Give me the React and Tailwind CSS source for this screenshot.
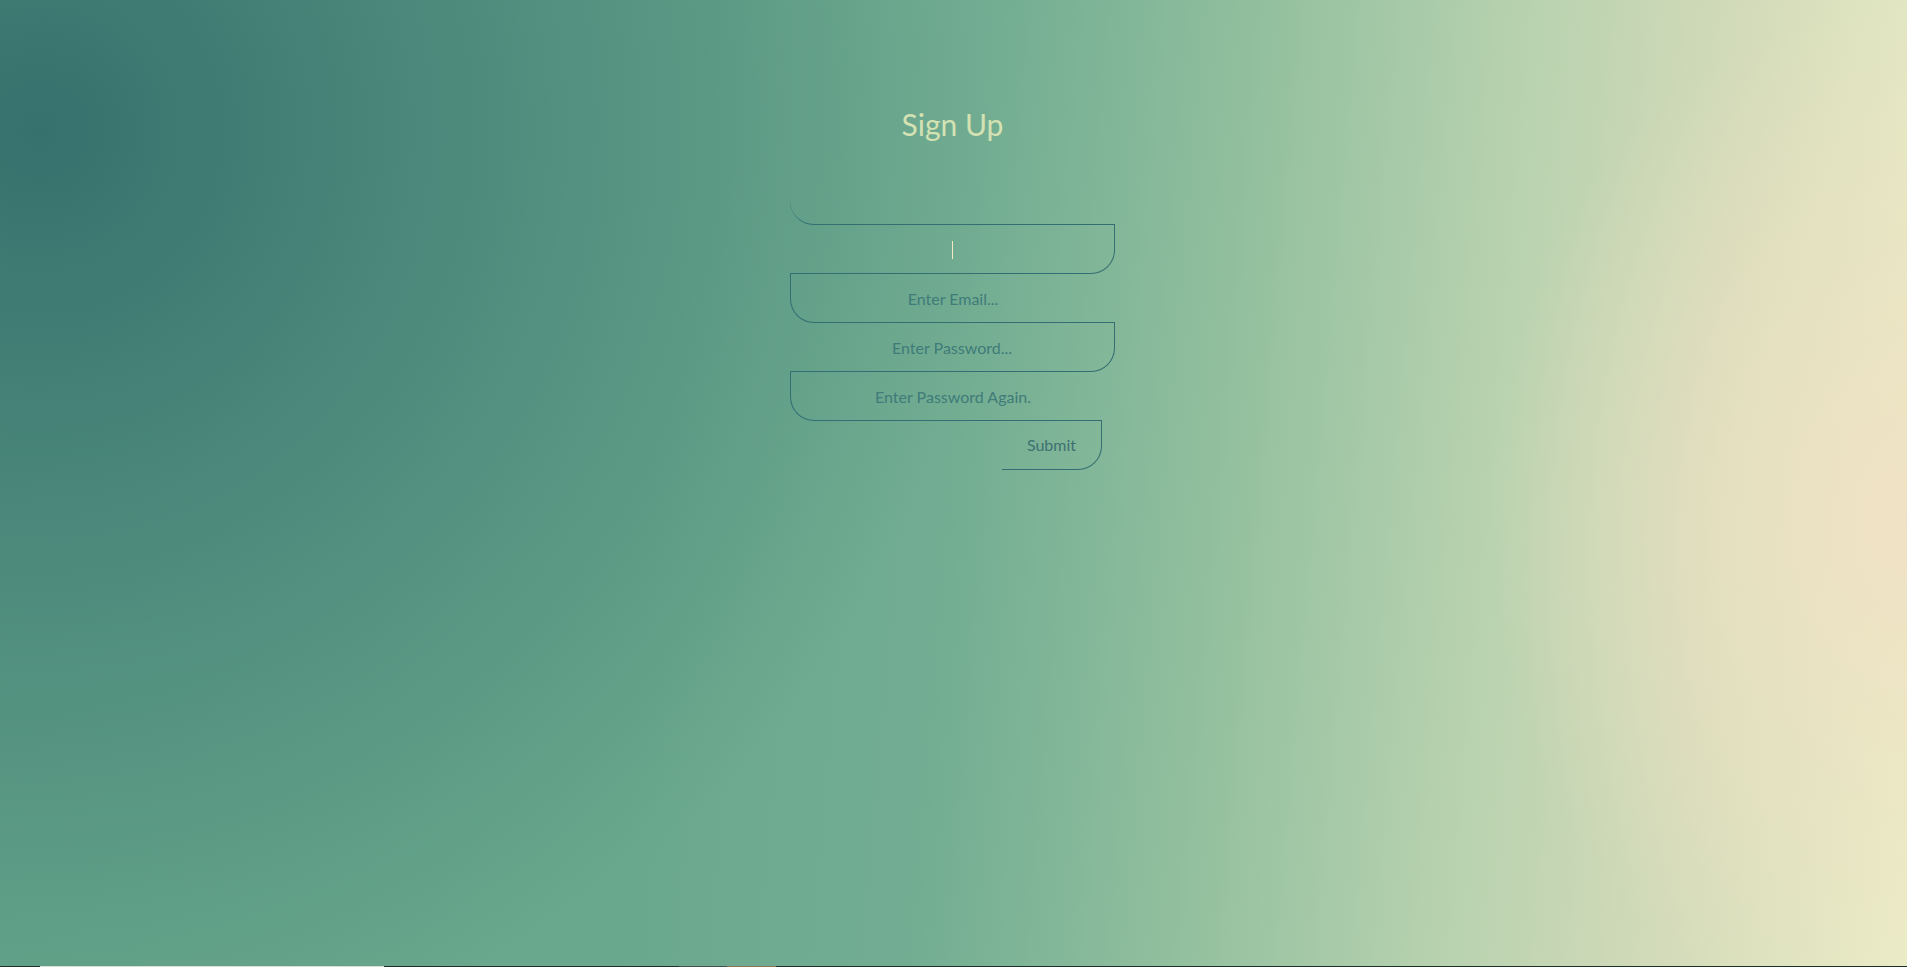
import React from "react";

// Sign-up form: stacked inputs with alternating borders and rounded corners
export default function App() {
  return (
    <div className="min-h-screen w-full flex flex-col font-['Lato','Open_Sans',sans-serif] bg-[radial-gradient(circle_950px_at_40px_130px,rgba(52,110,108,0.95)_0%,rgba(52,110,108,0.55)_40%,rgba(52,110,108,0)_100%),radial-gradient(ellipse_420px_520px_at_1907px_520px,rgba(240,226,196,0.95)_0%,rgba(240,226,196,0)_100%),linear-gradient(95deg,#66a68b_0%,#6aa88d_35%,#72ad92_50%,#91bf9e_63%,#b6d1ae_76%,#d4dbba_88%,#eaedc6_100%)]">
      <main className="flex-1 flex flex-col items-center pr-[2px]">
        <h1 className="mt-[106px] text-[30px] leading-[36px] font-normal text-[#d4e2b3]">
          Sign Up
        </h1>

        <form className="mt-[34px] w-[325px] flex flex-col" onSubmit={(e) => e.preventDefault()}>
          {/* first field: only the bottom line and its corner */}
          <input
            type="text"
            className="h-[49px] w-full bg-transparent text-center text-[16px] text-[#2f6a6c] outline-none border-b border-[#336f72] rounded-bl-[24px]"
          />

          {/* focused field with caret */}
          <div className="relative h-[49px] w-full border-r border-b border-[#336f72] rounded-br-[24px]">
            <input
              type="text"
              className="h-full w-full bg-transparent text-center text-[16px] text-[#2f6a6c] outline-none"
            />
            <span className="absolute left-1/2 top-[16px] h-[18px] w-px bg-[#f1e9c2]" />
          </div>

          <input
            type="email"
            placeholder="Enter Email..."
            className="h-[49px] w-full bg-transparent text-center text-[16px] text-[#2f6a6c] placeholder:text-[#3f7b79] outline-none border-l border-b border-[#336f72] rounded-bl-[24px]"
          />
          <input
            type="password"
            placeholder="Enter Password..."
            className="h-[49px] w-full bg-transparent text-center text-[16px] text-[#2f6a6c] placeholder:text-[#3f7b79] outline-none border-r border-b border-[#336f72] rounded-br-[24px]"
          />
          <input
            type="password"
            placeholder="Enter Password Again."
            className="h-[49px] w-[312px] pl-[13px] bg-transparent text-center text-[16px] text-[#2f6a6c] placeholder:text-[#3f7b79] outline-none border-l border-b border-[#336f72] rounded-bl-[24px]"
          />

          <button
            type="submit"
            className="self-end mr-[13px] h-[49px] w-[100px] bg-transparent text-[16px] font-normal text-[#3d7172] border-r border-b border-[#336f72] rounded-br-[24px]"
          >
            Submit
          </button>
        </form>
      </main>

      {/* thin strip along the bottom edge */}
      <div className="h-px w-full flex bg-[#1c302c]">
        <div className="w-[40px]" />
        <div className="w-[344px] bg-[#d8ddd5]" />
        <div className="w-[295px]" />
        <div className="w-[48px] bg-[#41534f]" />
        <div className="w-[49px] bg-[#8c7452]" />
      </div>
    </div>
  );
}
